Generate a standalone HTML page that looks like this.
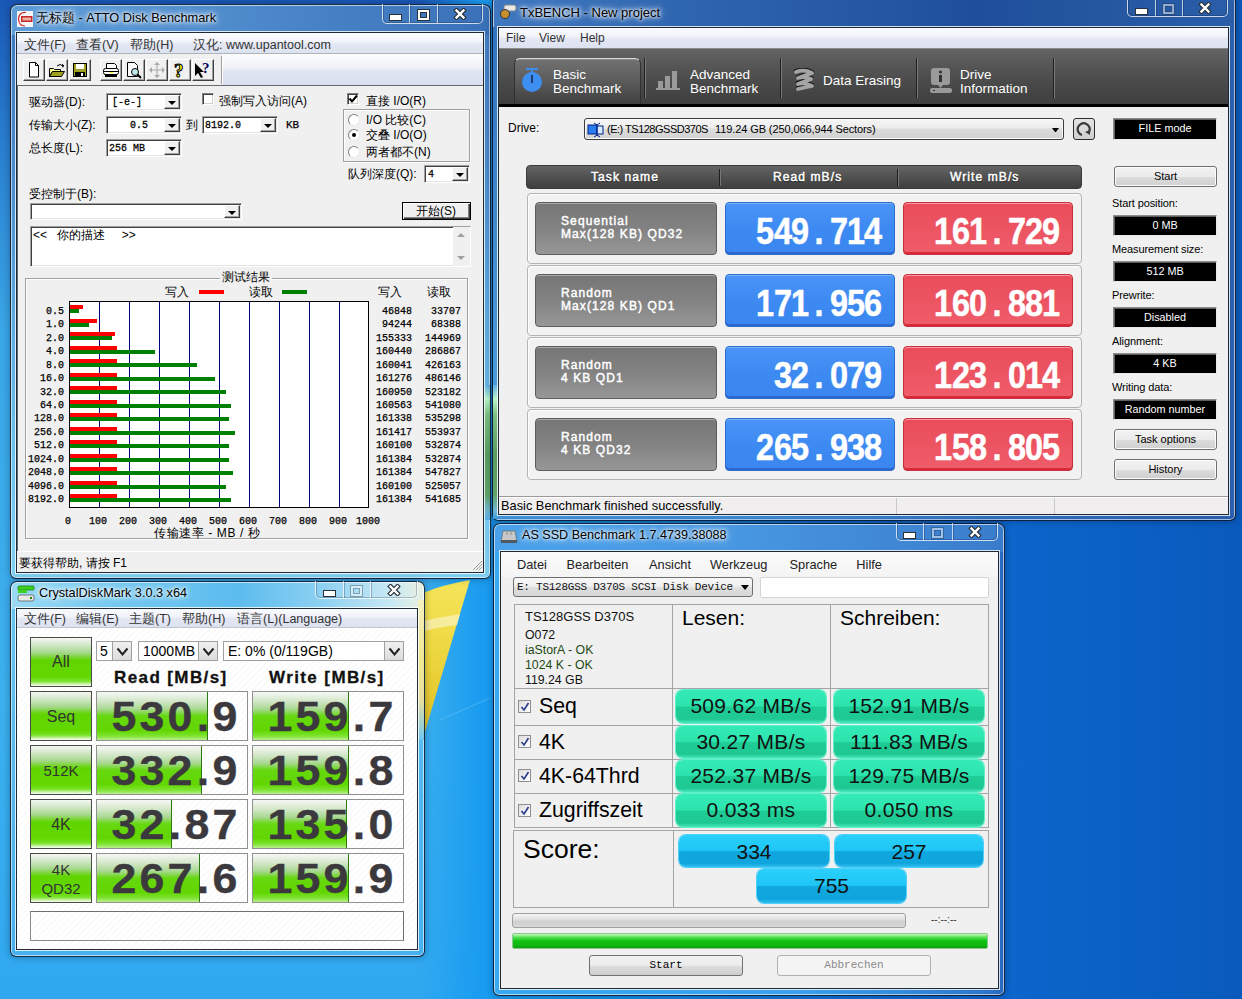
<!DOCTYPE html>
<html><head><meta charset="utf-8">
<style>
*{box-sizing:border-box;margin:0;padding:0}
html,body{width:1242px;height:999px;overflow:hidden}
body{position:relative;font-family:"Liberation Sans",sans-serif;font-size:12px;color:#000;
background:linear-gradient(90deg,rgba(26,156,240,0) 0,rgba(26,156,240,0) 420px,#1a9cf0 480px,#1590e6 600px,#0e72d6 850px,#0c66cc 1000px,#0a5abc 1242px),linear-gradient(#1a58b6 0,#2a80d0 150px,#3aa6e6 330px,#3cb0ee 700px,#30a8f0 999px)}
.a{position:absolute;white-space:nowrap}
.win{position:absolute;border:1px solid #1b2a3c;border-radius:7px 7px 6px 6px;box-shadow:inset 0 0 0 1px rgba(255,255,255,.55)}
.client{position:absolute;border:1px solid #26323e;box-shadow:0 0 0 1px rgba(255,255,255,.75);background:#f0f0f0;overflow:hidden}
.ttl{position:absolute;font-size:13px;color:#000;text-shadow:0 0 6px #fff,0 0 3px #fff,0 0 2px #fff;white-space:nowrap}
.caps{position:absolute;top:0;height:19px;border:1px solid rgba(255,255,255,.7);border-top:none;border-radius:0 0 5px 5px;background:rgba(255,255,255,.08)}
.caps b{position:absolute;top:0;bottom:0;border-left:1px solid rgba(255,255,255,.65)}
.mn{position:absolute;width:12px;height:5px;background:#fff;border:1px solid #334}
.mx{position:absolute;width:12px;height:10px;border:3px solid #fff;box-shadow:0 0 0 1px #334,inset 0 0 0 1px #334}
.cx{position:absolute;width:46px;text-align:center;font:bold 15px "Liberation Sans",sans-serif;color:#fff;text-shadow:1px 0 #223,-1px 0 #223,0 1px #223,0 -1px #223}
.dis .mx{border-color:rgba(255,255,255,.45);box-shadow:none}
.mono{font-family:"Liberation Mono",monospace}

.fr{position:absolute;border:1px solid rgba(10,20,35,.85);border-radius:7px 7px 6px 6px;box-shadow:inset 0 0 0 1px rgba(255,255,255,.6),0 0 7px rgba(0,10,40,.35)}
.cl{position:absolute;border:1px solid #1e2a36;box-shadow:0 0 0 1px rgba(255,255,255,.8)}
.cg{position:absolute;border:1px solid rgba(255,255,255,.75);border-top:none;border-radius:0 0 5px 5px;box-shadow:inset 0 0 0 1px rgba(0,20,60,.25)}
.cg b{position:absolute;top:0;bottom:0;width:1px;background:rgba(255,255,255,.7);box-shadow:1px 0 0 rgba(0,20,60,.25)}
.gmn{position:absolute;width:11px;height:3px;background:#fff;box-shadow:0 0 0 1px #29313b}
.gmx{position:absolute;width:11px;height:8px;border:2px solid #fff;box-shadow:0 0 0 1px #29313b,inset 0 0 0 1px #29313b}
.gmx.d{border-color:rgba(255,255,255,.5);box-shadow:0 0 0 1px rgba(40,50,60,.35),inset 0 0 0 1px rgba(40,50,60,.35)}
.gx{position:absolute}

.menu1{background:linear-gradient(#fbfcfe 0,#f1f3f9 45%,#e3e7f3 55%,#dde2f0 100%)}
.tbb{position:absolute;width:22px;height:22px;background:#f0f0f0;border:1px solid;border-color:#fff #404040 #404040 #fff;box-shadow:inset -1px -1px 0 #a0a0a0}
.sunk{border:1px solid;border-color:#a0a0a0 #fff #fff #a0a0a0;box-shadow:inset 1px 1px 0 #404040,inset -1px -1px 0 #e3e3e3;background:#fff}
.ddb{position:absolute;top:1px;right:1px;width:16px;bottom:1px;background:#f0f0f0;border:1px solid;border-color:#fff #404040 #404040 #fff;box-shadow:inset -1px -1px 0 #a0a0a0}
.ddb:after{content:"";position:absolute;left:3px;top:5px;border-left:4px solid transparent;border-right:4px solid transparent;border-top:4px solid #000}
.cjk{font-size:12px;line-height:14px}
.chk{position:absolute;width:12px;height:12px;border:1px solid;border-color:#808080 #fff #fff #808080;box-shadow:inset 1px 1px 0 #404040,inset -1px -1px 0 #d4d0c8;background:#fff}
.rad{position:absolute;width:12px;height:12px;border-radius:50%;background:#fff;border:1px solid;border-color:#808080 #e8e8e8 #e8e8e8 #808080}
.etch{position:absolute;border:1px solid #a0a0a0;box-shadow:1px 1px 0 #fff,inset 1px 1px 0 #fff}
.n10{font-family:"Liberation Mono",monospace;font-size:10px;line-height:10px;-webkit-text-stroke:.25px #000}

.txm{background:linear-gradient(#fbfcfe 0,#f1f3f9 45%,#e3e7f3 55%,#dde2f0 100%)}
.tab{font-size:13.5px;line-height:14px;color:#fff;white-space:nowrap}
.hdr{background:linear-gradient(#656565 0,#515151 50%,#3f3f3f 100%);border-radius:4px;border:1px solid #3a3a3a}
.htx{font:12px "Liberation Sans",sans-serif;color:#fff;text-shadow:0 1px 1px #000;letter-spacing:1.1px;-webkit-text-stroke:.5px #fff}
.rowp{border:1px solid #b4b4b4;border-radius:4px;background:#f2f2f2;box-shadow:inset 1px 1px 0 #fff}
.tsk{border:1px solid #5c5c5c;border-radius:4px;background:linear-gradient(#767676 0,#828282 50%,#979797 100%);box-shadow:inset 0 1px 0 #a8a8a8}
.ttx{font:12px "Liberation Sans",sans-serif;color:#fff;line-height:13px;letter-spacing:1.1px;-webkit-text-stroke:.45px #fff}
.blu{border:1px solid #2b6ad0;border-radius:4px;background:linear-gradient(#4a94f6 0,#3d8af2 50%,#3b86f0 100%);box-shadow:inset 0 -2px 0 #2a68cc,inset 0 1px 0 #79b2fa}
.red{border:1px solid #c83040;border-radius:4px;background:linear-gradient(#ea4c5a 0,#ec5462 50%,#ef5d6a 100%);box-shadow:inset 0 -2px 0 #d8283a,inset 0 1px 0 #f89aa4}
.val{font:bold 36px "Liberation Sans",sans-serif;color:#fff;line-height:38px;-webkit-text-stroke:.5px #fff;display:flex}
.val i{font-style:normal;display:flex;justify-content:center;width:17.2px}
.val i span{display:inline-block;transform:scaleX(.9)}
.val i.p{width:22px}
.blk{background:#000;border:1px solid;border-color:#8c8c8c #e8e8e8 #e8e8e8 #8c8c8c;box-shadow:inset 1px 1px 0 #606060;color:#fff;text-align:center;font-size:10.8px;line-height:19px}
.btn7{border:1px solid #707070;border-radius:3px;background:linear-gradient(#f2f2f2 0,#ebebeb 50%,#dddddd 51%,#cfcfcf 100%);box-shadow:inset 0 0 0 1px #fcfcfc;text-align:center;font-size:11px;line-height:19px;color:#000}
.lbl{font-size:11px;color:#000;letter-spacing:-.1px}

.cdmbg{background:repeating-linear-gradient(135deg,#fff 0,#fff 3px,#f5f5f5 3.6px,#fff 4.6px)}
.gbtn{border:1px solid #4a4a4a;background:linear-gradient(#f4f7f2 0,#d8ead0 12%,#a8d890 30%,#60d400 46%,#62d800 80%,#7ae22a 90%,#d8f6c0 97%,#f4fff0 100%);color:#333;text-align:center;font-size:16px}
.vbox{border:1px solid #909090;background:transparent;overflow:hidden}
.gfill{position:absolute;left:0;top:0;bottom:0;background:linear-gradient(#f6f8f4 0,#d6e8cc 18%,#a8d890 36%,#66d810 50%,#62d600 80%,#7ee434 92%,#bdf090 100%);border-right:1px solid #2a7a10}
.cv{position:absolute;font:bold 43px "Liberation Sans",sans-serif;color:#3b393d;line-height:42px;display:flex;-webkit-text-stroke:.4px #3b393d}
.cv i{font-style:normal;display:flex;justify-content:center;width:28px}
.cv i span{display:inline-block;transform:scaleX(1.04)}
.cv i.p{width:17px}
.cmb{border:1px solid #a0a0a0;background:#fff;font-size:14px;line-height:18px}
.cmbb{position:absolute;top:0;right:0;bottom:0;width:19px;border-left:1px solid #a0a0a0;background:linear-gradient(#f0f0f0,#dcdcdc)}

.asg{background:linear-gradient(#34eab6 0,#2de3ae 48%,#1fcc95 52%,#1ec892 88%,#48e8bc 100%);border-radius:7px;box-shadow:0 0 0 1px #5ef0c8;text-align:center;font-size:21px;color:#111;line-height:32px;letter-spacing:.3px}
.asb{background:linear-gradient(#2ad0fa 0,#1fc6f6 48%,#10a8e0 52%,#0fa4dc 88%,#30c0f0 100%);border-radius:7px;box-shadow:0 0 0 1px #50d0f8;text-align:center;font-size:21px;color:#111;line-height:33px}
.ln{background:#a4a4a4}
.ack{position:absolute;width:13px;height:13px;border:1px solid #8e8f8f;background:linear-gradient(135deg,#dcdcdc,#fff)}
</style></head><body>
<svg class="a" style="left:400px;top:570px" width="90" height="180"><defs><linearGradient id="yl" x1="0" y1="0" x2="0" y2="1"><stop offset="0" stop-color="#f6e45a"/><stop offset=".35" stop-color="#f0dc48"/><stop offset="1" stop-color="#e0c020"/></linearGradient></defs><path d="M20 24Q45 14 70 10L24 165H20z" fill="url(#yl)"/><path d="M20 52Q40 47 60 44L57 55Q38 57 20 62z" fill="#f8f0b0" opacity=".8"/><path d="M40 150L90 128" stroke="#60c0f8" stroke-width="1" opacity=".6"/></svg><div class="a fr" style="left:10px;top:4px;width:481px;height:575px;background:linear-gradient(90deg,#5d9cd8 0,#4f8ccc 45%,#3a70b8 100%) 0 0/100% 30px no-repeat,linear-gradient(#3d78c0 0,#4888cc 150px,#58a8e0 300px,#6cc2ee 450px,#80d0f2 575px)"></div><div class="a" style="left:484px;top:385px;width:6px;height:135px;background:linear-gradient(#64b0e4 0,#b8f4c8 14px,#7cc080 30px,#5a9c5e 70px,#62a468 110px,#70b8d0 125px,#5ab0e8 135px)"></div><div class="a" style="left:36px;top:10px;font-size:12.8px;color:#000;text-shadow:0 0 8px #fff,0 0 5px #fff,0 0 3px rgba(255,255,255,.9)">无标题 - ATTO Disk Benchmark</div><div class="a cg" style="left:382px;top:4px;width:101px;height:20px;"><b style="left:26px"></b><b style="left:54px"></b></div><div class="a gmn" style="left:390px;top:15px;width:11px;height:5px;"></div><div class="a gmx" style="left:418px;top:10px;width:11px;height:10px;"></div><svg class="a gx" style="left:453px;top:8px" width="14" height="12"><path d="M3.5 2.5L10.5 9.5M10.5 2.5L3.5 9.5" stroke="#29313b" stroke-width="4.6" stroke-linecap="square"/><path d="M3.5 2.5L10.5 9.5M10.5 2.5L3.5 9.5" stroke="#fff" stroke-width="2.4" stroke-linecap="square"/></svg><div class="a fr" style="left:492px;top:-5px;width:744px;height:526px;background:linear-gradient(90deg,#4078c0 0,#2f66b0 25%,#1f4f9a 65%,#2a5ea8 100%) 0 0/100% 32px no-repeat,linear-gradient(90deg,#3f94de 0,#3a86d2 40%,#2c66b6 80%,#2a5eae 100%)"></div><div class="a" style="left:493px;top:27px;width:5px;height:358px;background:linear-gradient(#3274c0,#4a9cdc)"></div><div class="a" style="left:493px;top:385px;width:5px;height:134px;background:linear-gradient(#64b0e4 0,#b8f4c8 14px,#7cc080 30px,#5a9c5e 70px,#62a468 110px,#70b8d0 125px,#3f9ce0 134px)"></div><div class="a" style="left:520px;top:5px;font-size:13px;color:#000;text-shadow:0 0 8px #fff,0 0 5px #fff,0 0 3px rgba(255,255,255,.9)">TxBENCH - New project</div><div class="a cg" style="left:1127px;top:-1px;width:101px;height:18px;"><b style="left:27px"></b><b style="left:54px"></b></div><div class="a gmn" style="left:1136px;top:9px;width:11px;height:5px;"></div><div class="a gmx d" style="left:1163px;top:4px;width:11px;height:10px;"></div><svg class="a gx" style="left:1198px;top:2px" width="14" height="12"><path d="M3.5 2.5L10.5 9.5M10.5 2.5L3.5 9.5" stroke="#29313b" stroke-width="4.6" stroke-linecap="square"/><path d="M3.5 2.5L10.5 9.5M10.5 2.5L3.5 9.5" stroke="#fff" stroke-width="2.4" stroke-linecap="square"/></svg><div class="a fr" style="left:10px;top:581px;width:415px;height:376px;background:linear-gradient(90deg,#9cdaf4 0,#74c8f0 25%,#5cbcee 55%,#8cd0f2 75%,#c8e8f4 92%,#e8f0e0 100%) 0 0/100% 27px no-repeat,linear-gradient(#68c6f0 0,#52b8f0 200px,#46b0f0 376px)"></div><div class="a" style="left:418px;top:600px;width:6px;height:140px;background:linear-gradient(#f4f0c0 0,#f0e890 60px,#e8e0a0 100px,#70c8f0 140px)"></div><div class="a" style="left:39px;top:586px;font-size:12.7px;color:#000;text-shadow:0 0 8px #fff,0 0 5px #fff,0 0 3px rgba(255,255,255,.9)">CrystalDiskMark 3.0.3 x64</div><div class="a cg" style="left:315px;top:581px;width:103px;height:18px;"><b style="left:27px"></b><b style="left:54px"></b></div><div class="a gmn" style="left:324px;top:591px;width:11px;height:5px;"></div><div class="a gmx d" style="left:351px;top:586px;width:11px;height:10px;"></div><svg class="a gx" style="left:387px;top:584px" width="14" height="12"><path d="M3.5 2.5L10.5 9.5M10.5 2.5L3.5 9.5" stroke="#29313b" stroke-width="4.6" stroke-linecap="square"/><path d="M3.5 2.5L10.5 9.5M10.5 2.5L3.5 9.5" stroke="#fff" stroke-width="2.4" stroke-linecap="square"/></svg><div class="a fr" style="left:493px;top:523px;width:512px;height:473px;background:linear-gradient(90deg,#4aa2ea 0,#4898e2 45%,#3a7ccc 100%) 0 0/100% 28px no-repeat,linear-gradient(90deg,#38a8f0 0,#3aa0ec 60%,#2e78cc 95%,#2a68c0 100%)"></div><div class="a" style="left:522px;top:528px;font-size:12.6px;color:#000;text-shadow:0 0 8px #fff,0 0 5px #fff,0 0 3px rgba(255,255,255,.9)">AS SSD Benchmark 1.7.4739.38088</div><div class="a cg" style="left:896px;top:523px;width:102px;height:18px;"><b style="left:26px"></b><b style="left:55px"></b></div><div class="a gmn" style="left:904px;top:533px;width:11px;height:5px;"></div><div class="a gmx d" style="left:932px;top:528px;width:11px;height:10px;"></div><svg class="a gx" style="left:968px;top:526px" width="14" height="12"><path d="M3.5 2.5L10.5 9.5M10.5 2.5L3.5 9.5" stroke="#29313b" stroke-width="4.6" stroke-linecap="square"/><path d="M3.5 2.5L10.5 9.5M10.5 2.5L3.5 9.5" stroke="#fff" stroke-width="2.4" stroke-linecap="square"/></svg><svg class="a" style="left:17px;top:11px" width="16" height="16"><rect width="16" height="16" fill="#f6f6f6"/><path d="M9 1.5Q2 1 1.5 8Q2 15 8 15" fill="none" stroke="#d02828" stroke-width="1.2"/><rect x="4" y="5" width="11.5" height="6" fill="#c82828"/><rect x="5.5" y="6.5" width="8.5" height="3" fill="#e8b0a0"/></svg><div class="a menu1" style="left:17px;top:33px;width:466px;height:20px;"></div><div class="a" style="left:17px;top:53px;width:466px;height:1px;background:#c5c8d0"></div><div class="a" style="left:17px;top:54px;width:466px;height:31px;background:linear-gradient(#fcfcfd 0,#f0f2f8 45%,#e0e5f2 55%,#d8deef 100%)"></div><div class="a" style="left:17px;top:54px;width:205px;height:31px;background:#f0f0f0"></div><div class="a" style="left:17px;top:53px;width:466px;height:1px;background:#b0b4bc"></div><div class="a" style="left:24px;top:37px;font-size:12.5px;color:#333">文件(F)</div><div class="a" style="left:76px;top:37px;font-size:12.5px;color:#333">查看(V)</div><div class="a" style="left:130px;top:37px;font-size:12.5px;color:#333">帮助(H)</div><div class="a" style="left:193px;top:37px;font-size:12.5px;color:#333">汉化: www.upantool.com</div><div class="a tbb" style="left:23px;top:59px;width:22px;height:22px;"><div class="a" style="left:0;top:0"><svg width="20" height="20"><path d="M5.5 2.5h6l3 3v11.5h-9z" fill="#fff" stroke="#000"/><path d="M11.5 2.5v3h3" fill="none" stroke="#000"/></svg></div></div><div class="a tbb" style="left:46px;top:59px;width:22px;height:22px;"><div class="a" style="left:0;top:0"><svg width="20" height="20"><path d="M2.5 8.5h4l1 1h6v2h-8l-3 5z" fill="#ffff90" stroke="#000"/><path d="M2.5 16.5l3-5h12l-3 5z" fill="#a0a020" stroke="#000"/><path d="M10 6q3-3 6 0" fill="none" stroke="#000"/><path d="M15 4l2 2-2 1" fill="none" stroke="#000"/></svg></div></div><div class="a tbb" style="left:69px;top:59px;width:22px;height:22px;"><div class="a" style="left:0;top:0"><svg width="20" height="20"><rect x="3.5" y="3.5" width="13" height="13" fill="#a0a020" stroke="#000"/><rect x="6" y="4" width="8" height="5" fill="#fff"/><rect x="5" y="12" width="10" height="5" fill="#000"/><rect x="11" y="13" width="2" height="3" fill="#fff"/></svg></div></div><div class="a tbb" style="left:100px;top:59px;width:22px;height:22px;"><div class="a" style="left:0;top:0"><svg width="20" height="20"><path d="M5.5 3.5h8l2 2v3h-10z" fill="#fff" stroke="#000"/><rect x="2.5" y="8.5" width="15" height="6" rx="2" fill="#fff" stroke="#000"/><path d="M3 11.5h14" stroke="#000"/><rect x="4" y="14" width="12" height="3" fill="#000"/><rect x="9" y="12" width="3" height="1" fill="#ff0"/></svg></div></div><div class="a tbb" style="left:123px;top:59px;width:22px;height:22px;"><div class="a" style="left:0;top:0"><svg width="20" height="20"><path d="M3.5 2.5h7l3 3v11h-10z" fill="#fff" stroke="#000"/><circle cx="11" cy="12" r="3.5" fill="#bfe8e8" stroke="#000"/><path d="M13.5 14.5l3.5 3.5" stroke="#000" stroke-width="2"/></svg></div></div><div class="a tbb" style="left:146px;top:59px;width:22px;height:22px;"><div class="a" style="left:0;top:0"><svg width="20" height="20"><path d="M10 3v14M3 10h14" stroke="#a8a8a8"/><path d="M10 2l-3 3h6zM10 18l-3-3h6zM2 10l3-3v6zM18 10l-3-3v6z" fill="#a8a8a8"/></svg></div></div><div class="a tbb" style="left:169px;top:59px;width:22px;height:22px;"><div class="a" style="left:0;top:0"><svg width="20" height="20"><text x="4" y="17" font-family="Liberation Serif" font-weight="bold" font-size="19" fill="#ffff00" stroke="#000" stroke-width="1">?</text></svg></div></div><div class="a tbb" style="left:192px;top:59px;width:22px;height:22px;"><div class="a" style="left:0;top:0"><svg width="20" height="20"><path d="M2 3v13l3-3 3 5 2-1-3-5h4z" fill="#000"/><text x="9" y="13" font-family="Liberation Serif" font-weight="bold" font-size="15" fill="#000060">?</text></svg></div></div><div class="a" style="left:221px;top:56px;width:2px;height:28px;border-left:1px solid #a0a0a0;border-right:1px solid #fff"></div><div class="a" style="left:17px;top:85px;width:466px;height:466px;background:#f0f0f0;border-top:1px solid #696969;border-left:1px solid #696969"></div><div class="a cjk" style="left:29px;top:95px;">驱动器(D):</div><div class="a cjk" style="left:29px;top:118px;">传输大小(Z):</div><div class="a cjk" style="left:29px;top:141px;">总长度(L):</div><div class="a sunk" style="left:106px;top:93px;width:76px;height:18px;"><div class="a n10" style="left:5px;top:4px;font-size:10px;transform:scaleY(1.15)">[-e-]</div><div class="ddb"></div></div><div class="a sunk" style="left:106px;top:116px;width:76px;height:18px;"><div class="a n10" style="left:23px;top:4px;font-size:10px;transform:scaleY(1.15)">0.5</div><div class="ddb"></div></div><div class="a sunk" style="left:106px;top:139px;width:76px;height:18px;"><div class="a n10" style="left:2px;top:4px;font-size:10px;transform:scaleY(1.15)">256 MB</div><div class="ddb"></div></div><div class="a cjk" style="left:186px;top:118px;">到</div><div class="a sunk" style="left:202px;top:116px;width:76px;height:18px;"><div class="a n10" style="left:2px;top:4px;font-size:10px;transform:scaleY(1.15)">8192.0</div><div class="ddb"></div></div><div class="a n10" style="left:286px;top:120px;font-size:11px">KB</div><div class="chk" style="left:202px;top:93px"></div><div class="a cjk" style="left:219px;top:94px;">强制写入访问(A)</div><div class="chk" style="left:347px;top:93px"><svg width="10" height="10" style="position:absolute;left:0;top:0"><path d="M1.5 4.5l2.5 3 5-6" fill="none" stroke="#000" stroke-width="2"/></svg></div><div class="a cjk" style="left:366px;top:94px;">直接 I/O(R)</div><div class="a etch" style="left:343px;top:109px;width:127px;height:53px;"></div><div class="rad" style="left:348px;top:114px"></div><div class="a cjk" style="left:366px;top:113px;">I/O 比较(C)</div><div class="rad" style="left:348px;top:129px"><div class="a" style="left:3px;top:3px;width:4px;height:4px;border-radius:50%;background:#000"></div></div><div class="a cjk" style="left:366px;top:128px;">交叠 I/O(O)</div><div class="rad" style="left:348px;top:146px"></div><div class="a cjk" style="left:366px;top:145px;">两者都不(N)</div><div class="a cjk" style="left:348px;top:167px;">队列深度(Q):</div><div class="a sunk" style="left:424px;top:165px;width:46px;height:18px;"><div class="a n10" style="left:3px;top:4px;font-size:10px;transform:scaleY(1.15)">4</div><div class="ddb"></div></div><div class="a cjk" style="left:29px;top:187px;">受控制于(B):</div><div class="a sunk" style="left:30px;top:203px;width:212px;height:17px;"><div class="ddb"></div></div><div class="a" style="left:402px;top:202px;width:69px;height:18px;background:#f0f0f0;border:1px solid #000;box-shadow:inset 1px 1px 0 #fff,inset -1px -1px 0 #404040,inset -2px -2px 0 #808080"><div class="a cjk" style="left:0;right:1px;top:1px;text-align:center">开始(S)</div></div><div class="a sunk" style="left:30px;top:226px;width:441px;height:41px;"><div class="a cjk" style="left:2px;top:1px">&lt;&lt;&nbsp;&nbsp; 你的描述 &nbsp;&nbsp;&nbsp; &gt;&gt;</div><div class="a" style="right:0;top:0;width:17px;bottom:0;background:#f0f0f0"></div><div class="a" style="right:5px;top:6px;border-left:4px solid transparent;border-right:4px solid transparent;border-bottom:4px solid #a0a0a0"></div><div class="a" style="right:5px;bottom:6px;border-left:4px solid transparent;border-right:4px solid transparent;border-top:4px solid #a0a0a0"></div></div><div class="a etch" style="left:25px;top:278px;width:443px;height:261px;"></div><div class="a cjk" style="left:220px;top:270px;background:#f0f0f0;padding:0 2px">测试结果</div><div class="a cjk" style="left:165px;top:285px;">写入</div><div class="a" style="left:199px;top:290px;width:25px;height:4px;background:#f00"></div><div class="a cjk" style="left:249px;top:285px;">读取</div><div class="a" style="left:282px;top:290px;width:25px;height:4px;background:#008000"></div><div class="a cjk" style="left:378px;top:285px;">写入</div><div class="a cjk" style="left:427px;top:285px;">读取</div><div class="a" style="left:69px;top:301px;width:300px;height:207px;background:#fff;border:1px solid #000"></div><div class="a" style="left:99px;top:302px;width:1px;height:205px;background:#000080"></div><div class="a" style="left:129px;top:302px;width:1px;height:205px;background:#000080"></div><div class="a" style="left:159px;top:302px;width:1px;height:205px;background:#000080"></div><div class="a" style="left:189px;top:302px;width:1px;height:205px;background:#000080"></div><div class="a" style="left:219px;top:302px;width:1px;height:205px;background:#000080"></div><div class="a" style="left:249px;top:302px;width:1px;height:205px;background:#000080"></div><div class="a" style="left:279px;top:302px;width:1px;height:205px;background:#000080"></div><div class="a" style="left:309px;top:302px;width:1px;height:205px;background:#000080"></div><div class="a" style="left:339px;top:302px;width:1px;height:205px;background:#000080"></div><div class="a" style="left:70px;top:305px;width:13px;height:4px;background:#f00"></div><div class="a" style="left:70px;top:309px;width:9px;height:4px;background:#008000"></div><div class="a n10" style="right:1178px;top:307px">0.5</div><div class="a n10" style="right:830px;top:307px">46848</div><div class="a n10" style="right:781px;top:307px">33707</div><div class="a" style="left:70px;top:319px;width:27px;height:4px;background:#f00"></div><div class="a" style="left:70px;top:323px;width:19px;height:4px;background:#008000"></div><div class="a n10" style="right:1178px;top:320px">1.0</div><div class="a n10" style="right:830px;top:320px">94244</div><div class="a n10" style="right:781px;top:320px">68388</div><div class="a" style="left:70px;top:332px;width:45px;height:4px;background:#f00"></div><div class="a" style="left:70px;top:336px;width:42px;height:4px;background:#008000"></div><div class="a n10" style="right:1178px;top:334px">2.0</div><div class="a n10" style="right:830px;top:334px">155333</div><div class="a n10" style="right:781px;top:334px">144969</div><div class="a" style="left:70px;top:346px;width:47px;height:4px;background:#f00"></div><div class="a" style="left:70px;top:350px;width:85px;height:4px;background:#008000"></div><div class="a n10" style="right:1178px;top:347px">4.0</div><div class="a n10" style="right:830px;top:347px">160440</div><div class="a n10" style="right:781px;top:347px">286867</div><div class="a" style="left:70px;top:359px;width:47px;height:4px;background:#f00"></div><div class="a" style="left:70px;top:363px;width:127px;height:4px;background:#008000"></div><div class="a n10" style="right:1178px;top:361px">8.0</div><div class="a n10" style="right:830px;top:361px">160041</div><div class="a n10" style="right:781px;top:361px">426163</div><div class="a" style="left:70px;top:373px;width:47px;height:4px;background:#f00"></div><div class="a" style="left:70px;top:377px;width:145px;height:4px;background:#008000"></div><div class="a n10" style="right:1178px;top:374px">16.0</div><div class="a n10" style="right:830px;top:374px">161276</div><div class="a n10" style="right:781px;top:374px">486146</div><div class="a" style="left:70px;top:386px;width:47px;height:4px;background:#f00"></div><div class="a" style="left:70px;top:390px;width:156px;height:4px;background:#008000"></div><div class="a n10" style="right:1178px;top:388px">32.0</div><div class="a n10" style="right:830px;top:388px">160950</div><div class="a n10" style="right:781px;top:388px">523182</div><div class="a" style="left:70px;top:400px;width:47px;height:4px;background:#f00"></div><div class="a" style="left:70px;top:404px;width:161px;height:4px;background:#008000"></div><div class="a n10" style="right:1178px;top:401px">64.0</div><div class="a n10" style="right:830px;top:401px">160563</div><div class="a n10" style="right:781px;top:401px">541080</div><div class="a" style="left:70px;top:413px;width:47px;height:4px;background:#f00"></div><div class="a" style="left:70px;top:417px;width:159px;height:4px;background:#008000"></div><div class="a n10" style="right:1178px;top:414px">128.0</div><div class="a n10" style="right:830px;top:414px">161338</div><div class="a n10" style="right:781px;top:414px">535298</div><div class="a" style="left:70px;top:427px;width:47px;height:4px;background:#f00"></div><div class="a" style="left:70px;top:431px;width:165px;height:4px;background:#008000"></div><div class="a n10" style="right:1178px;top:428px">256.0</div><div class="a n10" style="right:830px;top:428px">161417</div><div class="a n10" style="right:781px;top:428px">553937</div><div class="a" style="left:70px;top:440px;width:47px;height:4px;background:#f00"></div><div class="a" style="left:70px;top:444px;width:159px;height:4px;background:#008000"></div><div class="a n10" style="right:1178px;top:441px">512.0</div><div class="a n10" style="right:830px;top:441px">160100</div><div class="a n10" style="right:781px;top:441px">532874</div><div class="a" style="left:70px;top:454px;width:47px;height:4px;background:#f00"></div><div class="a" style="left:70px;top:458px;width:159px;height:4px;background:#008000"></div><div class="a n10" style="right:1178px;top:455px">1024.0</div><div class="a n10" style="right:830px;top:455px">161384</div><div class="a n10" style="right:781px;top:455px">532874</div><div class="a" style="left:70px;top:467px;width:47px;height:4px;background:#f00"></div><div class="a" style="left:70px;top:471px;width:163px;height:4px;background:#008000"></div><div class="a n10" style="right:1178px;top:468px">2048.0</div><div class="a n10" style="right:830px;top:468px">161384</div><div class="a n10" style="right:781px;top:468px">547827</div><div class="a" style="left:70px;top:481px;width:47px;height:4px;background:#f00"></div><div class="a" style="left:70px;top:485px;width:156px;height:4px;background:#008000"></div><div class="a n10" style="right:1178px;top:482px">4096.0</div><div class="a n10" style="right:830px;top:482px">160100</div><div class="a n10" style="right:781px;top:482px">525057</div><div class="a" style="left:70px;top:494px;width:47px;height:4px;background:#f00"></div><div class="a" style="left:70px;top:498px;width:161px;height:4px;background:#008000"></div><div class="a n10" style="right:1178px;top:495px">8192.0</div><div class="a n10" style="right:830px;top:495px">161384</div><div class="a n10" style="right:781px;top:495px">541685</div><div class="a n10" style="left:65.0px;top:516.5px">0</div><div class="a n10" style="left:89.0px;top:516.5px">100</div><div class="a n10" style="left:119.0px;top:516.5px">200</div><div class="a n10" style="left:149.0px;top:516.5px">300</div><div class="a n10" style="left:179.0px;top:516.5px">400</div><div class="a n10" style="left:209.0px;top:516.5px">500</div><div class="a n10" style="left:239.0px;top:516.5px">600</div><div class="a n10" style="left:269.0px;top:516.5px">700</div><div class="a n10" style="left:299.0px;top:516.5px">800</div><div class="a n10" style="left:329.0px;top:516.5px">900</div><div class="a n10" style="left:356.0px;top:516.5px">1000</div><div class="a cjk" style="left:154px;top:526px;letter-spacing:.6px">传输速率 - MB / 秒</div><div class="a" style="left:17px;top:551px;width:466px;height:21px;background:#f0f0f0;border-top:1px solid #fff"></div><div class="a cjk" style="left:19px;top:556px;">要获得帮助, 请按 F1</div><svg class="a" style="left:472px;top:560px" width="11" height="11"><path d="M10 1L1 10M10 4L4 10M10 7L7 10" stroke="#a0a0a0" stroke-width="1"/></svg><svg class="a" style="left:499px;top:3px" width="18" height="16"><rect x="5" y="2" width="12" height="6" rx="2" fill="#e8e8e8" stroke="#888"/><circle cx="6" cy="11" r="4.5" fill="#c89030" stroke="#333"/></svg><div class="a txm" style="left:498px;top:27px;width:731px;height:21px;"></div><div class="a" style="left:506px;top:31px;font-size:12px;color:#333">File</div><div class="a" style="left:539px;top:31px;font-size:12px;color:#333">View</div><div class="a" style="left:580px;top:31px;font-size:12px;color:#333">Help</div><div class="a" style="left:498px;top:48px;width:731px;height:57px;background:linear-gradient(#646464 0,#5a5a5a 20%,#4a4a4a 60%,#3e3e3e 100%);border-top:1px solid #8a8a8a"></div><div class="a" style="left:498px;top:104px;width:731px;height:3px;background:#000"></div><div class="a" style="left:498px;top:107px;width:731px;height:1px;background:#d0d0d0"></div><div class="a" style="left:514px;top:58px;width:127px;height:46px;border-radius:6px 6px 0 0;background:linear-gradient(#727272 0,#606060 40%,#404040 100%);border:1px solid #303030;border-top-color:#d8d8d8;border-bottom:none;box-shadow:inset 0 1px 0 #8a8a8a"></div><div class="a" style="left:644px;top:58px;width:2px;height:40px;border-left:1px solid #202020;border-right:1px solid #7a7a7a"></div><div class="a" style="left:780px;top:58px;width:2px;height:40px;border-left:1px solid #202020;border-right:1px solid #7a7a7a"></div><div class="a" style="left:916px;top:58px;width:2px;height:40px;border-left:1px solid #202020;border-right:1px solid #7a7a7a"></div><div class="a" style="left:1053px;top:58px;width:2px;height:40px;border-left:1px solid #202020;border-right:1px solid #7a7a7a"></div><svg class="a" style="left:520px;top:67px" width="24" height="28"><rect x="6" y="1" width="12" height="2" fill="#3d8ef0"/><rect x="11" y="2" width="2" height="4" fill="#3d8ef0"/><circle cx="12" cy="15" r="10" fill="#3d8ef0"/><rect x="11" y="8" width="2" height="8" fill="#1d3d70"/></svg><svg class="a" style="left:655px;top:68px" width="26" height="24"><rect x="1" y="20" width="24" height="2" fill="#9a9a9a"/><rect x="3" y="13" width="5" height="7" fill="#9a9a9a"/><rect x="10" y="8" width="5" height="12" fill="#9a9a9a"/><rect x="17" y="3" width="5" height="17" fill="#9a9a9a"/></svg><svg class="a" style="left:792px;top:68px" width="24" height="24"><path d="M4 4Q12 1 20 5L6 10Q12 8 19 11L6 16Q12 14 20 18L6 21" fill="none" stroke="#1a1a1a" stroke-width="4.6" stroke-linecap="round" stroke-linejoin="round" transform="translate(0,-.8)"/><path d="M4 4Q12 1 20 5L6 10Q12 8 19 11L6 16Q12 14 20 18L6 21" fill="none" stroke="#a4a4a4" stroke-width="3.8" stroke-linecap="round" stroke-linejoin="round"/></svg><svg class="a" style="left:929px;top:67px" width="24" height="27"><rect x="2" y="1" width="19" height="17" rx="3" fill="#9a9a9a"/><circle cx="11.5" cy="5" r="1.6" fill="#333"/><rect x="10" y="8" width="3" height="7" fill="#333"/><path d="M9 18h5l-2.5 3z" fill="#9a9a9a"/><rect x="1" y="21" width="22" height="5" rx="2" fill="#9a9a9a"/><rect x="4" y="23" width="2" height="1" fill="#333"/></svg><div class="a tab" style="left:553px;top:68px;">Basic</div><div class="a tab" style="left:553px;top:82px;">Benchmark</div><div class="a tab" style="left:690px;top:68px;">Advanced</div><div class="a tab" style="left:690px;top:82px;">Benchmark</div><div class="a tab" style="left:960px;top:68px;">Drive</div><div class="a tab" style="left:960px;top:82px;">Information</div><div class="a tab" style="left:823px;top:74px;">Data Erasing</div><div class="a" style="left:498px;top:107px;width:731px;height:389px;background:#f0f0f0"></div><div class="a" style="left:508px;top:121px;font-size:12px">Drive:</div><div class="a" style="left:584px;top:118px;width:480px;height:22px;border:1px solid #3c3c3c;border-radius:3px;background:linear-gradient(#f6f6f6 0,#ececec 45%,#dcdcdc 50%,#d2d2d2 100%);box-shadow:inset 0 0 0 1px #fafafa"></div><svg class="a" style="left:587px;top:122px" width="18" height="16"><rect x="1" y="3" width="9" height="9" fill="#2a7af0" stroke="#00208a"/><rect x="10" y="4" width="6" height="8" fill="#d8e8ff" stroke="#00208a"/><path d="M7 1l3 2 3-2M10 3v11M7 15l3-2 3 2" fill="none" stroke="#00208a"/></svg><div class="a" style="left:607px;top:123px;font-size:11px;letter-spacing:-.5px">(E:) TS128GSSD370S</div><div class="a" style="left:715px;top:123px;font-size:11px;letter-spacing:-.1px">119.24 GB (250,066,944 Sectors)</div><div class="a" style="left:1052px;top:128px;width:7px;height:4px;border-left:3.5px solid transparent;border-right:3.5px solid transparent;border-top:4px solid #000"></div><div class="a" style="left:1073px;top:118px;width:22px;height:22px;border:1px solid #2c2c2c;border-radius:3px;background:linear-gradient(#e4e4e4,#cfcfcf)"><svg class="a" style="left:2px;top:2px" width="16" height="16"><path d="M6 14A6 6 0 1 1 13 11" fill="none" stroke="#3a3a3a" stroke-width="2.2"/><path d="M9 11l5 3v-5z" fill="#3a3a3a"/></svg></div><div class="a blk" style="left:1113px;top:118px;width:104px;height:22px;">FILE mode</div><div class="a hdr" style="left:526px;top:165px;width:556px;height:24px;"></div><div class="a" style="left:719px;top:169px;width:2px;height:17px;border-left:1px solid #1e1e1e;border-right:1px solid #777"></div><div class="a" style="left:897px;top:169px;width:2px;height:17px;border-left:1px solid #1e1e1e;border-right:1px solid #777"></div><div class="a htx" style="left:591px;top:170px;">Task name</div><div class="a htx" style="left:773px;top:170px;">Read mB/s</div><div class="a htx" style="left:950px;top:170px;">Write mB/s</div><div class="a rowp" style="left:527px;top:193px;width:555px;height:71px;"></div><div class="a tsk" style="left:535px;top:202px;width:182px;height:53px;"></div><div class="a ttx" style="left:561px;top:215px;">Sequential</div><div class="a ttx" style="left:561px;top:228px;">Max(128 KB) QD32</div><div class="a blu" style="left:725px;top:202px;width:170px;height:53px;"></div><div class="a val" style="right:360px;top:212.5px"><i><span>5</span></i><i><span>4</span></i><i><span>9</span></i><i class="p"><span>.</span></i><i><span>7</span></i><i><span>1</span></i><i><span>4</span></i></div><div class="a red" style="left:903px;top:202px;width:170px;height:53px;"></div><div class="a val" style="right:182px;top:212.5px"><i><span>1</span></i><i><span>6</span></i><i><span>1</span></i><i class="p"><span>.</span></i><i><span>7</span></i><i><span>2</span></i><i><span>9</span></i></div><div class="a rowp" style="left:527px;top:265px;width:555px;height:71px;"></div><div class="a tsk" style="left:535px;top:274px;width:182px;height:53px;"></div><div class="a ttx" style="left:561px;top:287px;">Random</div><div class="a ttx" style="left:561px;top:300px;">Max(128 KB) QD1</div><div class="a blu" style="left:725px;top:274px;width:170px;height:53px;"></div><div class="a val" style="right:360px;top:284.5px"><i><span>1</span></i><i><span>7</span></i><i><span>1</span></i><i class="p"><span>.</span></i><i><span>9</span></i><i><span>5</span></i><i><span>6</span></i></div><div class="a red" style="left:903px;top:274px;width:170px;height:53px;"></div><div class="a val" style="right:182px;top:284.5px"><i><span>1</span></i><i><span>6</span></i><i><span>0</span></i><i class="p"><span>.</span></i><i><span>8</span></i><i><span>8</span></i><i><span>1</span></i></div><div class="a rowp" style="left:527px;top:337px;width:555px;height:71px;"></div><div class="a tsk" style="left:535px;top:346px;width:182px;height:53px;"></div><div class="a ttx" style="left:561px;top:359px;">Random</div><div class="a ttx" style="left:561px;top:372px;">4 KB QD1</div><div class="a blu" style="left:725px;top:346px;width:170px;height:53px;"></div><div class="a val" style="right:360px;top:356.5px"><i><span>3</span></i><i><span>2</span></i><i class="p"><span>.</span></i><i><span>0</span></i><i><span>7</span></i><i><span>9</span></i></div><div class="a red" style="left:903px;top:346px;width:170px;height:53px;"></div><div class="a val" style="right:182px;top:356.5px"><i><span>1</span></i><i><span>2</span></i><i><span>3</span></i><i class="p"><span>.</span></i><i><span>0</span></i><i><span>1</span></i><i><span>4</span></i></div><div class="a rowp" style="left:527px;top:409px;width:555px;height:71px;"></div><div class="a tsk" style="left:535px;top:418px;width:182px;height:53px;"></div><div class="a ttx" style="left:561px;top:431px;">Random</div><div class="a ttx" style="left:561px;top:444px;">4 KB QD32</div><div class="a blu" style="left:725px;top:418px;width:170px;height:53px;"></div><div class="a val" style="right:360px;top:428.5px"><i><span>2</span></i><i><span>6</span></i><i><span>5</span></i><i class="p"><span>.</span></i><i><span>9</span></i><i><span>3</span></i><i><span>8</span></i></div><div class="a red" style="left:903px;top:418px;width:170px;height:53px;"></div><div class="a val" style="right:182px;top:428.5px"><i><span>1</span></i><i><span>5</span></i><i><span>8</span></i><i class="p"><span>.</span></i><i><span>8</span></i><i><span>0</span></i><i><span>5</span></i></div><div class="a btn7" style="left:1114px;top:166px;width:103px;height:21px;">Start</div><div class="a lbl" style="left:1112px;top:197px;">Start position:</div><div class="a blk" style="left:1113px;top:215px;width:104px;height:21px;">0 MB</div><div class="a lbl" style="left:1112px;top:243px;">Measurement size:</div><div class="a blk" style="left:1113px;top:261px;width:104px;height:21px;">512 MB</div><div class="a lbl" style="left:1112px;top:289px;">Prewrite:</div><div class="a blk" style="left:1113px;top:307px;width:104px;height:21px;">Disabled</div><div class="a lbl" style="left:1112px;top:335px;">Alignment:</div><div class="a blk" style="left:1113px;top:353px;width:104px;height:21px;">4 KB</div><div class="a lbl" style="left:1112px;top:381px;">Writing data:</div><div class="a blk" style="left:1113px;top:399px;width:104px;height:21px;">Random number</div><div class="a btn7" style="left:1114px;top:429px;width:103px;height:21px;">Task options</div><div class="a btn7" style="left:1114px;top:459px;width:103px;height:21px;">History</div><div class="a" style="left:498px;top:496px;width:731px;height:19px;background:#f0eeee;border-top:1px solid #9a9a9a;box-shadow:inset 0 1px 0 #fff"></div><div class="a" style="left:501px;top:498px;font-size:12.8px">Basic Benchmark finished successfully.</div><div class="a" style="left:896px;top:498px;width:1px;height:16px;background:#c8c8c8"></div><div class="a" style="left:1054px;top:498px;width:1px;height:16px;background:#c8c8c8"></div><svg class="a" style="left:17px;top:585px" width="18" height="18"><rect x="1" y="1" width="16" height="4" rx="1" fill="#40d020" stroke="#208010" stroke-width=".8"/><rect x="1" y="5" width="9" height="3" fill="#40d020"/><rect x="1" y="10" width="16" height="6" rx="2" fill="#e8e8e8" stroke="#606060" stroke-width=".8"/><rect x="13" y="12" width="2" height="2" fill="#208010"/></svg><div class="a cdmbg" style="left:17px;top:608px;width:401px;height:342px;"></div><div class="a" style="left:17px;top:608px;width:401px;height:20px;background:linear-gradient(#fbfcfe 0,#f1f3f9 45%,#e3e7f3 55%,#dde2f0 100%);border-bottom:1px solid #c0c4d0"></div><div class="a" style="left:24px;top:611px;font-size:12.5px;color:#333">文件(F)</div><div class="a" style="left:76px;top:611px;font-size:12.5px;color:#333">编辑(E)</div><div class="a" style="left:129px;top:611px;font-size:12.5px;color:#333">主题(T)</div><div class="a" style="left:182px;top:611px;font-size:12.5px;color:#333">帮助(H)</div><div class="a" style="left:237px;top:611px;font-size:12.5px;color:#333">语言(L)(Language)</div><div class="a gbtn" style="left:30px;top:637px;width:62px;height:50px;"><div class="a" style="left:0;right:0;top:15px">All</div></div><div class="a cmb" style="left:96px;top:641px;width:36px;height:20px;"><div class="a" style="left:3px;top:0">5</div><div class="cmbb"><svg class="a" style="left:3px;top:5px" width="13" height="10"><path d="M1.5 1.5l5 6 5-6" fill="none" stroke="#222" stroke-width="2"/></svg></div></div><div class="a cmb" style="left:138px;top:641px;width:80px;height:20px;"><div class="a" style="left:4px;top:0">1000MB</div><div class="cmbb"><svg class="a" style="left:3px;top:5px" width="13" height="10"><path d="M1.5 1.5l5 6 5-6" fill="none" stroke="#222" stroke-width="2"/></svg></div></div><div class="a cmb" style="left:223px;top:641px;width:181px;height:20px;"><div class="a" style="left:4px;top:0">E: 0% (0/119GB)</div><div class="cmbb"><svg class="a" style="left:3px;top:5px" width="13" height="10"><path d="M1.5 1.5l5 6 5-6" fill="none" stroke="#222" stroke-width="2"/></svg></div></div><div class="a" style="left:114px;top:666px;font-weight:bold;font-size:17px;color:#111;letter-spacing:1.4px;top:668px;-webkit-text-stroke:.3px #111">Read [MB/s]</div><div class="a" style="left:269px;top:666px;font-weight:bold;font-size:17px;color:#111;letter-spacing:1.4px;top:668px;-webkit-text-stroke:.3px #111">Write [MB/s]</div><div class="a gbtn" style="left:30px;top:691px;width:62px;height:50px;"><div class="a" style="left:0;right:0;top:16px;font-size:16px">Seq</div></div><div class="a vbox" style="left:96px;top:691px;width:152px;height:50px;"><div class="gfill" style="width:111px"></div><div class="cv" style="right:8px;top:3px"><i><span>5</span></i><i><span>3</span></i><i><span>0</span></i><i class="p"><span>.</span></i><i><span>9</span></i></div></div><div class="a vbox" style="left:252px;top:691px;width:152px;height:50px;"><div class="gfill" style="width:96px"></div><div class="cv" style="right:8px;top:3px"><i><span>1</span></i><i><span>5</span></i><i><span>9</span></i><i class="p"><span>.</span></i><i><span>7</span></i></div></div><div class="a gbtn" style="left:30px;top:745px;width:62px;height:50px;"><div class="a" style="left:0;right:0;top:16px;font-size:15px">512K</div></div><div class="a vbox" style="left:96px;top:745px;width:152px;height:50px;"><div class="gfill" style="width:105px"></div><div class="cv" style="right:8px;top:3px"><i><span>3</span></i><i><span>3</span></i><i><span>2</span></i><i class="p"><span>.</span></i><i><span>9</span></i></div></div><div class="a vbox" style="left:252px;top:745px;width:152px;height:50px;"><div class="gfill" style="width:96px"></div><div class="cv" style="right:8px;top:3px"><i><span>1</span></i><i><span>5</span></i><i><span>9</span></i><i class="p"><span>.</span></i><i><span>8</span></i></div></div><div class="a gbtn" style="left:30px;top:799px;width:62px;height:50px;"><div class="a" style="left:0;right:0;top:16px;font-size:16px">4K</div></div><div class="a vbox" style="left:96px;top:799px;width:152px;height:50px;"><div class="gfill" style="width:75px"></div><div class="cv" style="right:8px;top:3px"><i><span>3</span></i><i><span>2</span></i><i class="p"><span>.</span></i><i><span>8</span></i><i><span>7</span></i></div></div><div class="a vbox" style="left:252px;top:799px;width:152px;height:50px;"><div class="gfill" style="width:94px"></div><div class="cv" style="right:8px;top:3px"><i><span>1</span></i><i><span>3</span></i><i><span>5</span></i><i class="p"><span>.</span></i><i><span>0</span></i></div></div><div class="a gbtn" style="left:30px;top:853px;width:62px;height:50px;"><div class="a" style="left:0;right:0;top:6px;line-height:19px;font-size:15px">4K<br>QD32</div></div><div class="a vbox" style="left:96px;top:853px;width:152px;height:50px;"><div class="gfill" style="width:103px"></div><div class="cv" style="right:8px;top:3px"><i><span>2</span></i><i><span>6</span></i><i><span>7</span></i><i class="p"><span>.</span></i><i><span>6</span></i></div></div><div class="a vbox" style="left:252px;top:853px;width:152px;height:50px;"><div class="gfill" style="width:96px"></div><div class="cv" style="right:8px;top:3px"><i><span>1</span></i><i><span>5</span></i><i><span>9</span></i><i class="p"><span>.</span></i><i><span>9</span></i></div></div><div class="a" style="left:30px;top:911px;width:374px;height:30px;border:1px solid #707070;border-bottom-color:#8a8a8a;border-left-color:#8a8a8a"></div><svg class="a" style="left:500px;top:528px" width="18" height="16"><path d="M3 3h12l2 11H1z" fill="#c8c8c8" stroke="#707070" stroke-width=".8"/><rect x="1" y="12" width="16" height="3" fill="#505860"/><path d="M7 4v3M11 4v3" stroke="#888"/></svg><div class="a" style="left:500px;top:551px;width:499px;height:438px;background:#f0f0f0"></div><div class="a" style="left:500px;top:551px;width:499px;height:26px;background:linear-gradient(#fbfbfb,#f4f4f4)"></div><div class="a" style="left:517px;top:557px;font-size:12.8px;color:#222">Datei</div><div class="a" style="left:566.5px;top:557px;font-size:12.8px;color:#222">Bearbeiten</div><div class="a" style="left:649px;top:557px;font-size:12.8px;color:#222">Ansicht</div><div class="a" style="left:710px;top:557px;font-size:12.8px;color:#222">Werkzeug</div><div class="a" style="left:789.5px;top:557px;font-size:12.8px;color:#222">Sprache</div><div class="a" style="left:856.3px;top:557px;font-size:12.8px;color:#222">Hilfe</div><div class="a" style="left:513px;top:577px;width:240px;height:20px;border:1px solid #6e6e6e;border-radius:3px;background:linear-gradient(#f8f8f8 0,#efefef 45%,#dedede 55%,#d6d6d6 100%)"><div class="a mono" style="left:3px;top:3px;font-size:11px;letter-spacing:-.25px;color:#111">E: TS128GSS D370S SCSI Disk Device</div><div class="a" style="left:227px;top:7px;border-left:4px solid transparent;border-right:4px solid transparent;border-top:5px solid #000"></div></div><div class="a" style="left:760px;top:577px;width:229px;height:21px;border:1px solid #d4d4d4;border-radius:2px;background:#fff"></div><div class="a ln" style="left:514px;top:604px;width:1px;height:224px;"></div><div class="a ln" style="left:672px;top:604px;width:1px;height:224px;"></div><div class="a ln" style="left:830px;top:604px;width:1px;height:224px;"></div><div class="a ln" style="left:988px;top:604px;width:1px;height:224px;"></div><div class="a ln" style="left:514px;top:604px;width:475px;height:1px;"></div><div class="a ln" style="left:514px;top:688px;width:475px;height:1px;"></div><div class="a ln" style="left:514px;top:725px;width:475px;height:1px;"></div><div class="a ln" style="left:514px;top:759px;width:475px;height:1px;"></div><div class="a ln" style="left:514px;top:793px;width:475px;height:1px;"></div><div class="a ln" style="left:514px;top:827px;width:475px;height:1px;"></div><div class="a" style="left:525px;top:609px;font-size:13px;color:#111">TS128GSS D370S</div><div class="a" style="left:525px;top:628px;font-size:12.3px;color:#111">O072</div><div class="a" style="left:525px;top:643px;font-size:12.3px;color:#1e4a14">iaStorA - OK</div><div class="a" style="left:525px;top:658px;font-size:12.3px;color:#1e4a14">1024 K - OK</div><div class="a" style="left:525px;top:673px;font-size:12.3px;color:#111">119.24 GB</div><div class="a" style="left:682px;top:606px;font-size:21px;color:#000">Lesen:</div><div class="a" style="left:840px;top:606px;font-size:21px;color:#000">Schreiben:</div><div class="ack" style="left:518px;top:700px"><svg class="a" style="left:1px;top:1px" width="10" height="10"><path d="M1.5 5l2.5 3 4.5-7" fill="none" stroke="#2a3a8a" stroke-width="1.6"/></svg></div><div class="a" style="left:539px;top:694px;font-size:21.3px;color:#000">Seq</div><div class="a asg" style="left:676px;top:690px;width:150px;height:33px;">509.62 MB/s</div><div class="a asg" style="left:834px;top:690px;width:150px;height:33px;">152.91 MB/s</div><div class="ack" style="left:518px;top:735px"><svg class="a" style="left:1px;top:1px" width="10" height="10"><path d="M1.5 5l2.5 3 4.5-7" fill="none" stroke="#2a3a8a" stroke-width="1.6"/></svg></div><div class="a" style="left:539px;top:730px;font-size:21.3px;color:#000">4K</div><div class="a asg" style="left:676px;top:726px;width:150px;height:32px;">30.27 MB/s</div><div class="a asg" style="left:834px;top:726px;width:150px;height:32px;">111.83 MB/s</div><div class="ack" style="left:518px;top:769px"><svg class="a" style="left:1px;top:1px" width="10" height="10"><path d="M1.5 5l2.5 3 4.5-7" fill="none" stroke="#2a3a8a" stroke-width="1.6"/></svg></div><div class="a" style="left:539px;top:764px;font-size:21.3px;color:#000">4K-64Thrd</div><div class="a asg" style="left:676px;top:760px;width:150px;height:32px;">252.37 MB/s</div><div class="a asg" style="left:834px;top:760px;width:150px;height:32px;">129.75 MB/s</div><div class="ack" style="left:518px;top:804px"><svg class="a" style="left:1px;top:1px" width="10" height="10"><path d="M1.5 5l2.5 3 4.5-7" fill="none" stroke="#2a3a8a" stroke-width="1.6"/></svg></div><div class="a" style="left:539px;top:798px;font-size:21.3px;color:#000">Zugriffszeit</div><div class="a asg" style="left:676px;top:794px;width:150px;height:33px;">0.033 ms</div><div class="a asg" style="left:834px;top:794px;width:150px;height:33px;">0.050 ms</div><div class="a ln" style="left:513px;top:830px;width:476px;height:1px;"></div><div class="a ln" style="left:513px;top:907px;width:476px;height:1px;"></div><div class="a ln" style="left:513px;top:830px;width:1px;height:78px;"></div><div class="a ln" style="left:988px;top:830px;width:1px;height:78px;"></div><div class="a ln" style="left:673px;top:830px;width:1px;height:78px;"></div><div class="a" style="left:523px;top:834px;font-size:26.5px;color:#000">Score:</div><div class="a asb" style="left:679px;top:835px;width:150px;height:32px;">334</div><div class="a asb" style="left:835px;top:835px;width:148px;height:32px;">257</div><div class="a asb" style="left:757px;top:869px;width:149px;height:34px;">755</div><div class="a" style="left:512px;top:913px;width:394px;height:15px;border:1px solid #a0a0a0;border-radius:3px;background:linear-gradient(#f4f4f4 0,#dedede 45%,#cfcfcf 55%,#d8d8d8 100%)"></div><div class="a" style="left:931px;top:914px;font-size:10px;color:#333">--:--:--</div><div class="a" style="left:512px;top:933px;width:476px;height:16px;border:1px solid #8cc88c;border-radius:2px;background:linear-gradient(#c8f8c0 0,#50e050 25%,#10c010 50%,#10b810 80%,#109c10 100%)"></div><div class="a" style="left:589px;top:955px;width:154px;height:21px;border:1px solid #707070;border-radius:3px;background:linear-gradient(#f2f2f2 0,#ebebeb 50%,#dddddd 51%,#cfcfcf 100%)"><div class="a mono" style="left:0;right:0;top:3px;text-align:center;font-size:11px">Start</div></div><div class="a" style="left:777px;top:955px;width:154px;height:21px;border:1px solid #adb2b5;border-radius:3px;background:#f4f4f4"><div class="a mono" style="left:0;right:0;top:3px;text-align:center;font-size:11px;color:#8a8a8a">Abbrechen</div></div><div class="a cl" style="left:16px;top:32px;width:468px;height:541px;"></div><div class="a cl" style="left:498px;top:27px;width:731px;height:488px;"></div><div class="a cl" style="left:16px;top:608px;width:402px;height:342px;"></div><div class="a cl" style="left:500px;top:551px;width:499px;height:438px;"></div></body></html>
